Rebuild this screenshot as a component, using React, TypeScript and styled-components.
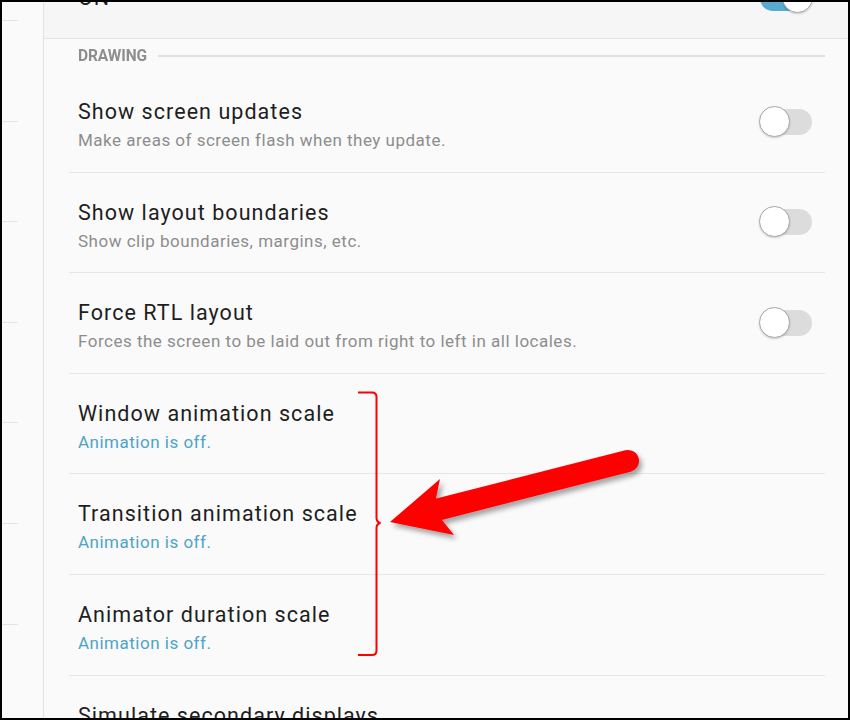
import { createGlobalStyle } from 'styled-components';
import styled from 'styled-components';

const GlobalStyle = createGlobalStyle`
  html, body {
    margin: 0;
    padding: 0;
    background: #ffffff;
  }
  body {
    font-family: Roboto, 'Noto Sans', sans-serif;
  }
`;

const Frame = styled.div`
  position: relative;
  width: 850px;
  height: 720px;
  box-sizing: border-box;
  border: 2px solid #000;
  overflow: hidden;
  display: flex;
  background: #fafafa;
`;

const Rail = styled.div`
  width: 41px;
  flex: none;
  border-right: 1px solid #e2e2e2;
  padding-top: 18px;
  display: flex;
  flex-direction: column;
`;

const RailStub = styled.div`
  width: 16px;
  height: 100.6px;
  flex: none;
  box-sizing: border-box;
  border-top: 1px solid #e4e4e4;
`;

const Main = styled.div`
  flex: 1;
  display: flex;
  flex-direction: column;
  min-width: 0;
`;

const TopSection = styled.div`
  height: 36px;
  flex: none;
  background: #f6f6f6;
  border-bottom: 1px solid #e3e3e3;
  padding: 0 36px 0 34px;
  overflow: hidden;
`;

const TopRow = styled.div`
  margin-top: -19px;
  height: 30px;
  display: flex;
  align-items: center;
  justify-content: space-between;
`;

const CategoryHeader = styled.div`
  height: 33px;
  flex: none;
  display: flex;
  align-items: center;
  padding: 0 23px 0 34px;
  gap: 11px;
`;

const CategoryLabel = styled.span`
  font-size: 15.5px;
  font-weight: 700;
  color: #8e8e8e;
  letter-spacing: -0.1px;
  transform: scaleY(1.08);
`;

const CategoryRule = styled.div`
  flex: 1;
  height: 2px;
  background: #e0e0e0;
`;

const List = styled.div`
  flex: none;
  padding: 0 23px 0 25px;
  display: flex;
  flex-direction: column;
`;

const Row = styled.div`
  height: 100.6px;
  flex: none;
  box-sizing: border-box;
  border-bottom: 1px solid #e6e6e6;
  padding: 0 13px 0 9px;
  display: flex;
  align-items: center;
  justify-content: space-between;
`;

const Texts = styled.div`
  align-self: flex-start;
  display: flex;
  flex-direction: column;
  margin-top: 26px;
`;

const Title = styled.div`
  font-size: 21.5px;
  line-height: 28px;
  letter-spacing: 1.05px;
  color: #1e1e1e;
`;

const Summary = styled.div<{ $accent?: boolean }>`
  margin-top: 2px;
  font-size: 17px;
  line-height: 24px;
  letter-spacing: 0.5px;
  color: ${(p) => (p.$accent ? '#4ea4c8' : '#8d8d8d')};
`;

const Track = styled.div<{ $on?: boolean }>`
  position: relative;
  width: 52px;
  height: 26px;
  border-radius: 13px;
  background: ${(p) => (p.$on ? '#58abcf' : '#dcdcdc')};
  flex: none;
`;

const Knob = styled.div<{ $on?: boolean }>`
  position: absolute;
  top: -3px;
  ${(p) => (p.$on ? 'right: -1px;' : 'left: -1px;')}
  width: 29px;
  height: 29px;
  border-radius: 50%;
  background: #fff;
  border: 1.5px solid #a9a9a9;
  box-shadow: 0 1px 2px rgba(0, 0, 0, 0.18);
`;

const Overlay = styled.svg`
  position: absolute;
  left: -2px;
  top: -2px;
  pointer-events: none;
`;

function Toggle({ on }: { on?: boolean }) {
  return (
    <Track $on={on}>
      <Knob $on={on} />
    </Track>
  );
}

type Item = {
  title: string;
  summary?: string;
  accent?: boolean;
  toggle?: boolean;
};

const items: Item[] = [
  { title: 'Show screen updates', summary: 'Make areas of screen flash when they update.', toggle: true },
  { title: 'Show layout boundaries', summary: 'Show clip boundaries, margins, etc.', toggle: true },
  {
    title: 'Force RTL layout',
    summary: 'Forces the screen to be laid out from right to left in all locales.',
    toggle: true,
  },
  { title: 'Window animation scale', summary: 'Animation is off.', accent: true },
  { title: 'Transition animation scale', summary: 'Animation is off.', accent: true },
  { title: 'Animator duration scale', summary: 'Animation is off.', accent: true },
  { title: 'Simulate secondary displays' },
];

export default function App() {
  return (
    <>
      <GlobalStyle />
      <Frame>
        <Rail>
          {Array.from({ length: 7 }).map((_, i) => (
            <RailStub key={i} />
          ))}
        </Rail>
        <Main>
          <TopSection>
            <TopRow>
              <Title>ON</Title>
              <Toggle on />
            </TopRow>
          </TopSection>
          <CategoryHeader>
            <CategoryLabel>DRAWING</CategoryLabel>
            <CategoryRule />
          </CategoryHeader>
          <List>
            {items.map((it) => (
              <Row key={it.title}>
                <Texts>
                  <Title>{it.title}</Title>
                  {it.summary && <Summary $accent={it.accent}>{it.summary}</Summary>}
                </Texts>
                {it.toggle && <Toggle />}
              </Row>
            ))}
          </List>
        </Main>
        {/* annotation: bracket + arrow drawn on top of the screenshot */}
        <Overlay width={850} height={720} viewBox="0 0 850 720">
          <defs>
            <filter id="shadow" x="-10%" y="-20%" width="130%" height="160%">
              <feDropShadow dx="3" dy="4" stdDeviation="2.5" floodColor="#000" floodOpacity="0.35" />
            </filter>
          </defs>
          <path
            d="M358 392.5 H372 Q376.5 392.5 376.5 397 V518 Q376.5 522 380.5 523 Q376.5 524 376.5 528 V650.5 Q376.5 655 372 655 H358"
            fill="none"
            stroke="#ff0000"
            strokeWidth={2}
          />
          <g filter="url(#shadow)">
            <line x1={440} y1={509} x2={628} y2={461} stroke="#ff0000" strokeWidth={22} strokeLinecap="round" />
            <polygon points="390,522 440,479 436,498 442,520 454,535" fill="#ff0000" />
          </g>
        </Overlay>
      </Frame>
    </>
  );
}
